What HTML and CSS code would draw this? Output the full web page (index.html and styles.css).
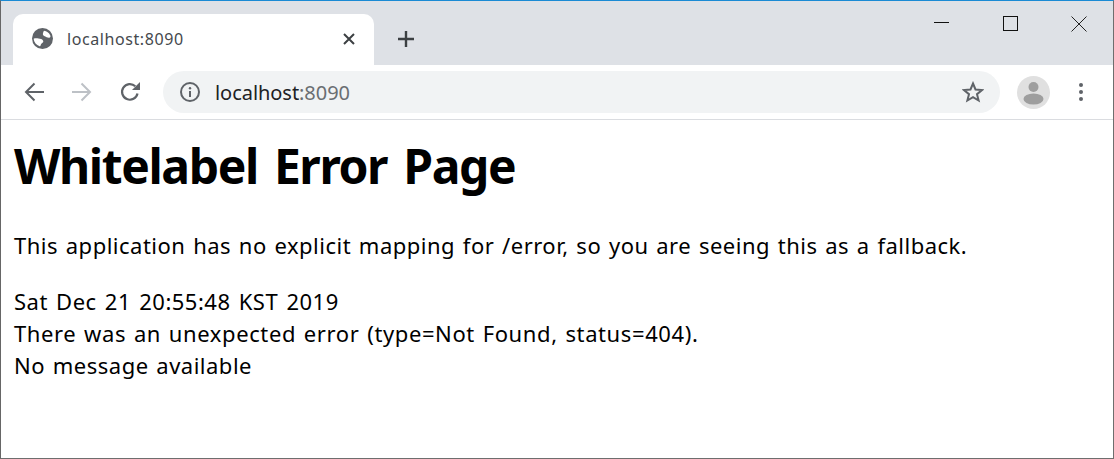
FILE: index.html
```html
<!DOCTYPE html>
<html lang="en">
<head>
<meta charset="utf-8">
<title>localhost:8090</title>
<link rel="stylesheet" href="styles.css">
</head>
<body>
<div class="window">
  <header class="tabstrip">
    <div class="tab">
      <svg class="favicon" width="21" height="21" viewBox="0 0 21 21"><circle cx="10.500" cy="10.500" r="10.500" fill="#5f6368"/><path d="M12 2.800c2.800.4 5 2 6.300 4.600.4 1 .1 2.200-1.100 2.400-1.800.2-3-.9-4.300-1.500-1.300-.5-2.200-1.300-2-2.600.1-1.200.6-2.200 1.100-2.900zM1.600 10.800c1.500-.8 3.300-.5 4.900-.4 1.800.1 3.600.6 4.500 2 .6 1 .2 2-.8 2.500-.9.500-1.300 1.300-1.500 2.300-.1.500-.5 1-1.100 1C4.300 17.200 2 14.300 1.600 10.800z" fill="#fff"/></svg>
      <span class="tab-title">localhost:8090</span>
      <svg class="tab-close" width="12" height="12" viewBox="0 0 12 12"><path d="M1 1l10 10M11 1L1 11" stroke="#3c4043" stroke-width="2" fill="none"/></svg>
    </div>
    <svg class="new-tab" width="18" height="18" viewBox="0 0 18 18"><path d="M9 1v16M1 9h16" stroke="#3c4043" stroke-width="2.400" fill="none"/></svg>
    <div class="window-controls">
      <svg class="win-btn win-narrow" width="16" height="16" viewBox="0 0 16 16"><path d="M0 6.500h15" stroke="#111" fill="none"/></svg>
      <svg class="win-btn win-narrow" width="16" height="16" viewBox="0 0 16 16"><rect x=".5" y=".5" width="14" height="14" stroke="#111" fill="none"/></svg>
      <svg class="win-btn" width="16" height="16" viewBox="0 0 16 16"><path d="M.5.500l15 15M15.500.500l-15 15" stroke="#222" fill="none"/></svg>
    </div>
  </header>
  <nav class="toolbar">
    <svg class="nav-icon" width="20" height="20" viewBox="0 0 20 20"><path d="M20 10H2M10.500 1.500 2 10l8.500 8.500" stroke="#5f6368" stroke-width="2" fill="none"/></svg>
    <svg class="nav-icon" width="20" height="20" viewBox="0 0 20 20"><path d="M0 10h18M9.500 1.500 18 10l-8.500 8.500" stroke="#bdc1c6" stroke-width="2" fill="none"/></svg>
    <svg class="nav-icon" width="20" height="20" viewBox="0 0 20 20"><path d="M17.500 11.500A7.800 7.800 0 1 1 15.300 4.300" stroke="#5f6368" stroke-width="2.200" fill="none"/><path d="M12 8h8V0z" fill="#5f6368"/></svg>
    <div class="omnibox">
      <svg class="info" width="20" height="20" viewBox="0 0 20 20"><circle cx="10" cy="10" r="9" stroke="#5f6368" stroke-width="2" fill="none"/><path d="M10 9v6" stroke="#5f6368" stroke-width="2" fill="none"/><circle cx="10" cy="6.300" r="1.200" fill="#5f6368"/></svg>
      <span class="url">localhost<span class="url-port">:8090</span></span>
      <svg class="star" width="22" height="22" viewBox="0 0 22 22"><path d="M11 2.500l2.500 6 6.500.5-5 4.200 1.600 6.300L11 16.100 5.400 19.500 7 13.200 2 9l6.500-.5z" stroke="#5f6368" stroke-width="2" fill="none"/></svg>
    </div>
    <svg class="avatar" width="33" height="33" viewBox="0 0 33 33"><circle cx="16.500" cy="16.500" r="16.500" fill="#e0e0e0"/><circle cx="16.500" cy="11" r="5" fill="#9e9e9e"/><ellipse cx="16.500" cy="23" rx="10" ry="5.500" fill="#9e9e9e"/></svg>
    <svg class="menu" width="6" height="20" viewBox="0 0 6 20"><circle cx="3" cy="3" r="2" fill="#5f6368"/><circle cx="3" cy="10" r="2" fill="#5f6368"/><circle cx="3" cy="17" r="2" fill="#5f6368"/></svg>
  </nav>
  <main class="content">
    <h1 class="title">Whitelabel Error Page</h1>
    <p class="lead">This application has no explicit mapping for /error, so you are seeing this as a fallback.</p>
    <div class="details">
      <div class="date">Sat Dec 21 20:55:48 KST 2019</div>
      <div class="status">There was an unexpected error (type=Not Found, status=404).</div>
      <div>No message available</div>
    </div>
  </main>
</div>
</body>
</html>
```
FILE: styles.css
```css
* { box-sizing: border-box; }
html, body { margin: 0; height: 100%; background: #fff; overflow: hidden; }
.window {
  height: 459px;
  border: 1px solid #6e6e6e;
  border-top: 1px solid #1a8ad4;
  border-left-color: #666;
  display: flex;
  flex-direction: column;
  font-family: "Noto Sans", "Open Sans", sans-serif;
  color: #000;
}
.tabstrip {
  height: 64px;
  background: #dee1e6;
  display: flex;
  align-items: flex-start;
  padding: 13px 0 0 12px;
  flex: none;
}
.tab {
  width: 361px;
  height: 51px;
  background: #fff;
  border-radius: 10px 10px 0 0;
  display: flex;
  align-items: center;
  padding: 0 19px 0 19px;
  flex: none;
}
.favicon { flex: none; margin: -2px 0 0 0; }
.tab-title {
  margin: -2px 0 0 14px;
  font: 16px "Noto Sans", sans-serif;
  letter-spacing: .58px;
  color: #45494d;
  flex: 1;
}
.tab-close { margin-top: -2px; }
.new-tab { margin: 16px 0 0 23px; }
.window-controls {
  margin: 0 0 0 auto;
  display: flex;
  gap: 53px;
  padding: 2px 26px 0 0;
}
.win-narrow { margin-right: -1px; }
.win-narrow:first-child { margin-right: 0; margin-left: 0; }
.toolbar {
  height: 55px;
  flex: none;
  border-bottom: 1px solid #dadce0;
  display: flex;
  align-items: center;
  padding: 0 24px 0 23px;
  background: #fff;
}
.nav-icon { flex: none; margin-right: 28px; }
.nav-icon:nth-child(3) { margin-right: 23px; }
.omnibox {
  width: 837px;
  height: 42px;
  border-radius: 21px;
  background: #f1f3f4;
  display: flex;
  align-items: center;
  padding: 0 16px 0 17px;
  flex: none;
}
.url {
  margin-left: 15px;
  font-size: 20px;
  letter-spacing: -.05px;
  color: #202124;
  flex: 1;
}
.url-port { color: #6a6e72; }
.avatar { margin: 0 0 0 17px; flex: none; }
.menu { margin-left: 28px; flex: none; }
.content { padding: 0 13px; flex: 1; }
.title {
  margin: 16px 0 0;
  font-size: 48px;
  line-height: 60px;
  font-weight: 700;
  letter-spacing: -1.4px;
  word-spacing: 5px;
}
.lead {
  margin: 33px 0 0;
  font-size: 22px;
  line-height: 32px;
  letter-spacing: .5px;
  word-spacing: 1.5px;
}
.details {
  margin-top: 24px;
  font-size: 22px;
  line-height: 32px;
  letter-spacing: .5px;
  word-spacing: 1.5px;
}
.date { word-spacing: 2px; }
.status { letter-spacing: .6px; }
```
